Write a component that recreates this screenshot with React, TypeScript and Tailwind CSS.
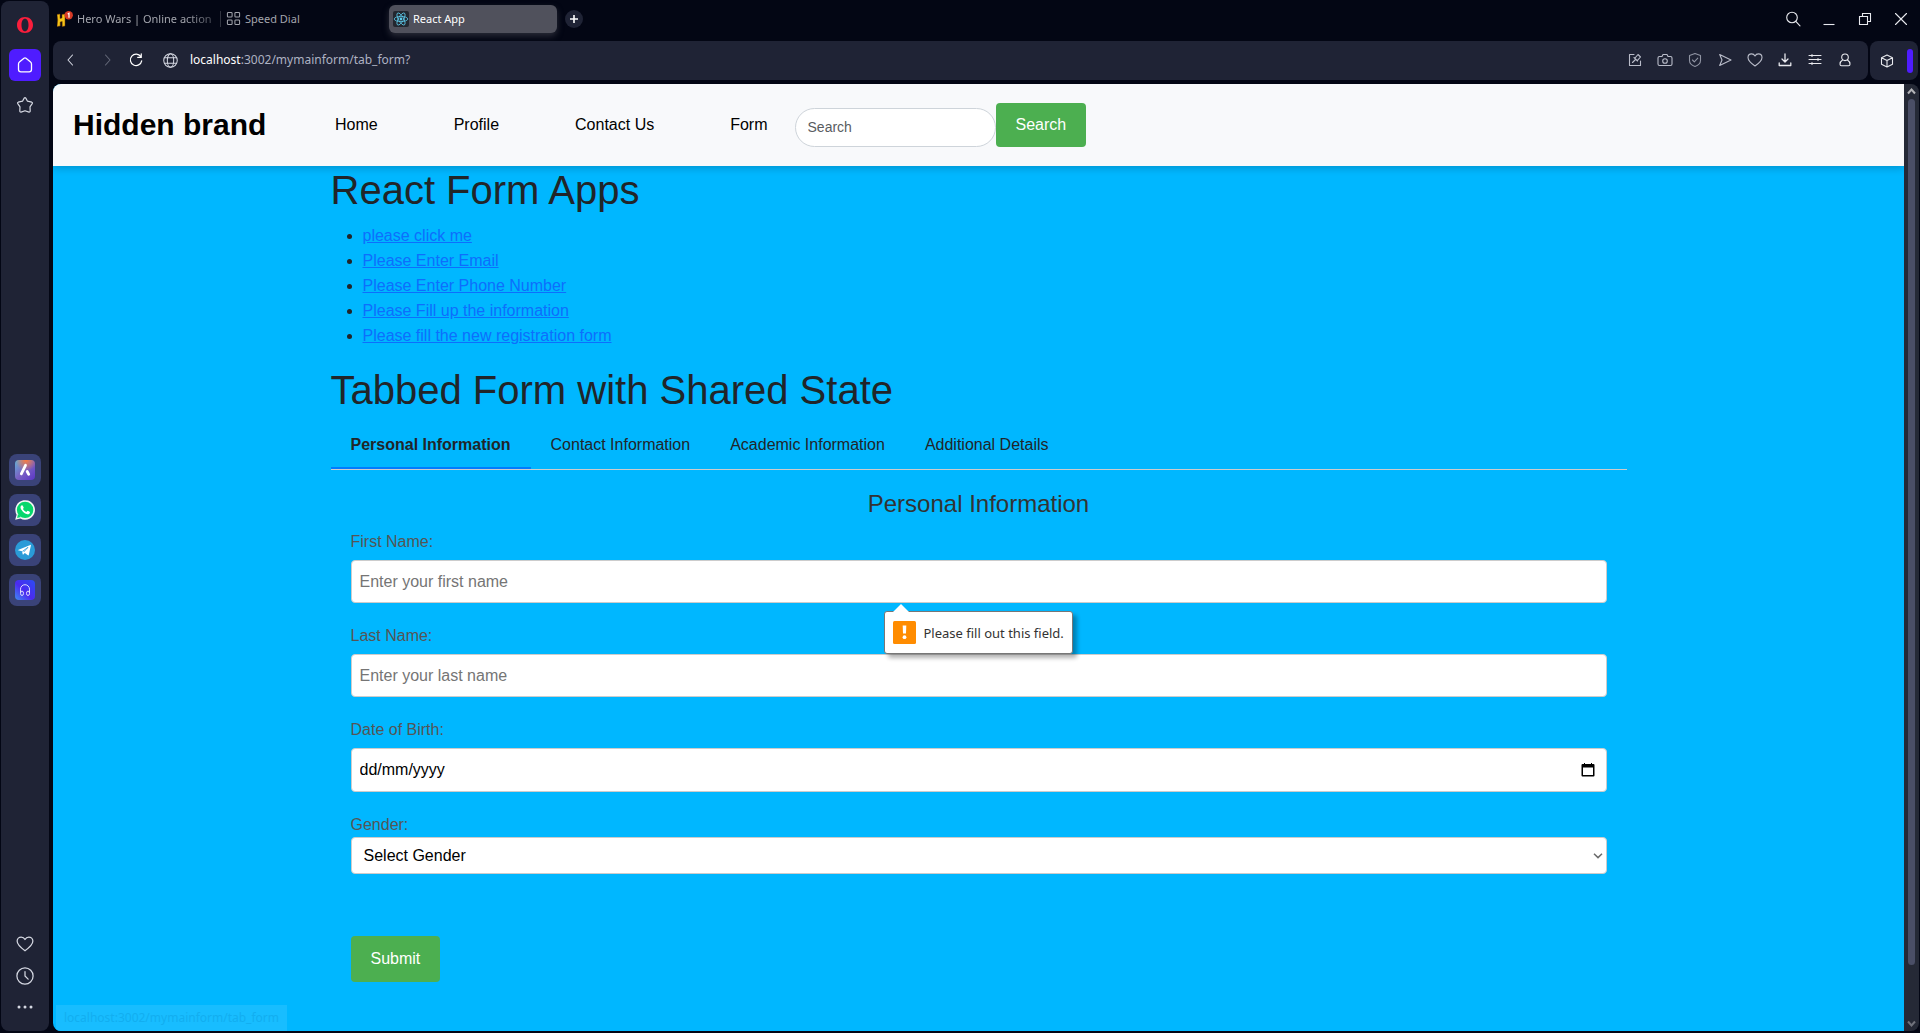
import type { ReactNode } from "react";

type IconProps = { children: ReactNode; size?: string };

function Icon({ children, size = "size-4" }: IconProps) {
  return (
    <svg
      viewBox="0 0 16 16"
      className={size}
      fill="none"
      stroke="currentColor"
      strokeWidth="1.1"
      strokeLinecap="round"
      strokeLinejoin="round"
      aria-hidden="true"
    >
      {children}
    </svg>
  );
}

const heart = (
  <path d="M8 14C4.5 11.5 1 9 1 5.4A3.6 3.6 0 0 1 4.6 1.9C6 1.9 7.300 2.700 8 4C8.700 2.700 10 1.900 11.400 1.900A3.600 3.600 0 0 1 15 5.400C15 9 11.500 11.500 8 14Z" />
);

function OperaLogo() {
  return (
    <svg viewBox="0 0 16 16" className="size-4" aria-hidden="true">
      <path
        fill="#fa1e3c"
        fillRule="evenodd"
        d="M8 0C3.400 0 0 3.400 0 8S3.400 16 8 16s8-3.400 8-8S12.600 0 8 0Zm0 1.700c2.200 0 3.500 2.700 3.500 6.300s-1.300 6.300-3.500 6.300S4.500 11.600 4.500 8s1.300-6.300 3.500-6.300Z"
      />
    </svg>
  );
}

function Sidebar() {
  return (
    <aside className="mt-px mr-1 mb-0.5 ml-px flex w-12 shrink-0 flex-col items-center rounded-lg bg-[#1f2335] pt-4 pb-3.5 text-[#d5d8e2]">
      <button aria-label="Opera menu" className="flex h-4 items-center">
        <OperaLogo />
      </button>
      <button
        aria-label="Workspace"
        className="mt-4 flex size-8 items-center justify-center rounded-md bg-[#4f1cff] text-white"
      >
        <Icon>
          <path strokeWidth="1.300" d="M7 1.300Q8 .6 9 1.300L13.300 4.800Q14.500 5.800 14.500 7V12.500Q14.500 14.900 12.100 14.900H3.900Q1.500 14.900 1.500 12.500V7Q1.500 5.800 2.700 4.800Z" />
        </Icon>
      </button>
      <button aria-label="Pinned" className="mt-4 flex size-4">
        <Icon>
          <path strokeWidth="1.200" d="M7.200 1.100Q8 .1 8.800 1.100L10.500 4.200 14.800 5.200Q15.800 5.600 15.200 6.600L13 9.800 13.200 14Q13.100 15.200 12 15.100L8 13.700 4 15.100Q2.900 15.200 2.800 14L3 9.800.8 6.600Q.2 5.600 1.200 5.200L5.500 4.200Z" />
        </Icon>
      </button>
      <div className="flex flex-1 flex-col items-center justify-center gap-2 pt-3">
        <button aria-label="Aria" className="flex size-8 items-center justify-center rounded-lg bg-[#3a4378]">
          <svg viewBox="0 0 20 20" className="size-5" aria-hidden="true">
            <defs>
              <linearGradient id="ariaBase" x1="0" y1="0" x2="1" y2="1">
                <stop offset="0" stopColor="#62b3d8" />
                <stop offset=".5" stopColor="#7a62c4" />
                <stop offset="1" stopColor="#5a35c8" />
              </linearGradient>
              <radialGradient id="ariaGlow" cx=".55" cy="0" r=".55">
                <stop offset="0" stopColor="#ff7a3c" />
                <stop offset="1" stopColor="#ff7a3c" stopOpacity="0" />
              </radialGradient>
            </defs>
            <rect width="20" height="20" rx="4" fill="url(#ariaBase)" />
            <rect width="20" height="20" rx="4" fill="url(#ariaGlow)" />
            <path d="M10.500 5.300 6.300 13.800" stroke="#fff" strokeWidth="2.800" strokeLinecap="round" />
            <path d="M12.200 11.500 13.700 14.300" stroke="#fff" strokeWidth="2.800" strokeLinecap="round" />
          </svg>
        </button>
        <button aria-label="WhatsApp" className="flex size-8 items-center justify-center rounded-lg bg-[#3a4378]">
          <svg viewBox="0 0 20 20" className="size-5" aria-hidden="true">
            <path fill="#f4f6f5" d="M.2 19.800 1.600 14.700A9.800 9.800 0 1 1 5.400 18.500Z" />
            <circle cx="10.100" cy="9.900" r="8.200" fill="#07d76c" />
            <path fill="#07d76c" d="M2.100 17.900 3 14 6 17Z" />
            <path fill="#fff" d="M7.300 5.300c-.4-.2-.9 0-1.200.4-.9 1-.9 2.500.5 4.400 1.700 2.400 3.700 3.900 5.800 4.200 1.300.2 2.600-.7 2.600-2.100 0-.4-2-1.400-2.400-1.400-.4 0-.8 1.200-1.300 1.200-.8 0-3.200-2.100-3.300-2.900 0-.4.700-.8.7-1.300 0-.3-.9-2.300-1.400-2.500Z" />
          </svg>
        </button>
        <button aria-label="Telegram" className="flex size-8 items-center justify-center rounded-lg bg-[#3a4378]">
          <svg viewBox="0 0 20 20" className="size-5" aria-hidden="true">
            <circle cx="10" cy="10" r="10" fill="#2a9bd8" />
            <path fill="#fff" d="M3 9.900 15.300 4.900Q16 4.700 15.900 5.500L13.800 15Q13.600 15.700 12.900 15.300L9.800 13 8.300 14.500Q7.800 14.900 7.700 14.200L7 11.300 3.100 10.300Q2.700 10.100 3 9.900Z" />
            <path stroke="#2a9bd8" strokeWidth=".8" d="M7.400 11.400 13 7.300 8.700 12" fill="none" />
          </svg>
        </button>
        <button aria-label="Player" className="flex size-8 items-center justify-center rounded-lg bg-[#3a4378]">
          <svg viewBox="0 0 20 20" className="size-5" aria-hidden="true">
            <defs>
              <linearGradient id="playerBase" x1="0" y1="1" x2="1" y2="0">
                <stop offset="0" stopColor="#3f8df5" />
                <stop offset=".45" stopColor="#4c2af0" />
                <stop offset="1" stopColor="#2b4df2" />
              </linearGradient>
            </defs>
            <rect width="20" height="20" rx="4" fill="url(#playerBase)" />
            <g fill="none" stroke="#dcdcff" strokeWidth="1">
              <path d="M5.500 13V9.200A4.500 4.500 0 0 1 14.500 9.200V13" />
              <ellipse cx="7" cy="13.300" rx="1.500" ry="2.200" />
              <ellipse cx="13" cy="13.300" rx="1.500" ry="2.200" />
            </g>
          </svg>
        </button>
      </div>
      <div className="flex flex-col items-center">
        <button aria-label="Favourites">
          <Icon size="size-[18px]">{heart}</Icon>
        </button>
        <button aria-label="History" className="mt-3.5">
          <Icon size="size-[18px]">
            <circle cx="8" cy="8" r="7.200" />
            <path d="M8 4V8L10.800 10.800" />
          </Icon>
        </button>
        <button aria-label="More" className="mt-4">
          <svg viewBox="0 0 16 16" className="size-4" fill="currentColor" aria-hidden="true">
            <circle cx="2" cy="6" r="1.500" />
            <circle cx="8" cy="6" r="1.500" />
            <circle cx="14" cy="6" r="1.500" />
          </svg>
        </button>
      </div>
    </aside>
  );
}

function TabStrip() {
  return (
    <div className="flex h-[41px] items-center pr-[11px] pb-1 pl-1 text-[11px] leading-4 text-[#a3a5ad]">
      <button className="flex w-[164px] items-center gap-1 border-r border-[#30333f] text-left">
        <svg viewBox="0 0 16 16" className="size-4 shrink-0" aria-hidden="true">
          <path fill="#f5c518" stroke="#7a3b00" strokeWidth=".5" d="M0 3.500 3 3V7.500L5 7V3.500L8 3V15L5.200 15.500V10.500L3.200 11V15L0 15.500 .7 9Z" />
          <circle cx="11.700" cy="4.300" r="4.200" fill="#d63a26" />
          <path stroke="#fff" strokeWidth="1.200" d="M10.700 3 12 2.200V6.700" fill="none" />
        </svg>
        <span className="whitespace-nowrap [mask-image:linear-gradient(to_right,black_80%,rgba(0,0,0,0.4))]">
          Hero Wars | Online action
        </span>
      </button>
      <button className="flex w-[168px] items-center gap-1 pl-[5px]">
        <Icon size="size-[15px]">
          <rect x="1.500" y="1.500" width="5" height="5" rx="1" />
          <rect x="9.500" y="1.500" width="5" height="5" rx="1" />
          <rect x="1.500" y="9.500" width="5" height="5" rx="1" />
          <rect x="9.500" y="9.500" width="5" height="5" rx="1" />
        </Icon>
        Speed Dial
      </button>
      <button className="flex h-7 w-[168px] items-center gap-1 rounded-md bg-[#50515c] pl-1 text-white shadow-[0_3px_6px_#2a2c38]">
        <svg viewBox="0 0 16 16" className="size-4" aria-hidden="true">
          <rect width="16" height="16" rx="2" fill="#23272f" />
          <g fill="none" stroke="#5cc8e8" strokeWidth=".8">
            <ellipse cx="8" cy="8" rx="6.800" ry="2.600" />
            <ellipse cx="8" cy="8" rx="6.800" ry="2.600" transform="rotate(60 8 8)" />
            <ellipse cx="8" cy="8" rx="6.800" ry="2.600" transform="rotate(120 8 8)" />
          </g>
          <circle cx="8" cy="8" r="1.400" fill="#5cc8e8" />
        </svg>
        React App
      </button>
      <button
        aria-label="New tab"
        className="ml-2 flex size-[18px] items-center justify-center rounded-full bg-[#1f2335] text-white"
      >
        <svg viewBox="0 0 8 8" className="size-2" stroke="currentColor" strokeWidth="1.600" aria-hidden="true">
          <path d="M4 0V8M0 4H8" />
        </svg>
      </button>
      <div className="ml-auto flex items-center gap-5 text-[#e8e9ee]">
        <button aria-label="Search tabs">
          <Icon>
            <circle cx="7" cy="6.500" r="5.300" />
            <path d="M10.800 10.300 15 14.800" />
          </Icon>
        </button>
        <button aria-label="Minimise">
          <Icon>
            <path d="M2.500 13.500H13.500" strokeLinecap="butt" />
          </Icon>
        </button>
        <button aria-label="Restore">
          <Icon>
            <path strokeLinejoin="miter" d="M2.500 5.500H10.500V13.500H2.500ZM5.500 5.500V2.500H13.500V10.500H10.500" />
          </Icon>
        </button>
        <button aria-label="Close">
          <Icon>
            <path d="M2.500 2.500 13.500 13.500M13.500 2.500 2.500 13.500" />
          </Icon>
        </button>
      </div>
    </div>
  );
}

function AddressBar() {
  return (
    <div className="mb-1 flex h-[39px] gap-0.5 pr-0.5">
      <div className="flex flex-1 items-center rounded-lg bg-[#1f2335] pr-[15px] pb-px pl-2.5 text-[#d5d8e2]">
        <button aria-label="Back">
          <Icon>
            <path d="M9.500 3 5 8 9.500 13" />
          </Icon>
        </button>
        <button aria-label="Forward" className="ml-5 text-[#646878]">
          <Icon>
            <path d="M6.500 3 11 8 6.500 13" />
          </Icon>
        </button>
        <button aria-label="Reload" className="ml-[14px] text-white">
          <Icon size="size-[14px]">
            <path strokeWidth="1.400" d="M13.500 4.200A6.500 6.500 0 1 0 14.500 9M14 1V5H10" />
          </Icon>
        </button>
        <button aria-label="Site information" className="ml-5">
          <Icon size="size-[15px]">
            <circle cx="8" cy="8" r="7.200" />
            <ellipse cx="8" cy="8" rx="3.400" ry="7.200" />
            <path d="M1.500 5H14.500M1.500 11H14.500" />
          </Icon>
        </button>
        <p className="ml-3 text-[12px] leading-4 text-[#aeb2c2]">
          <span className="text-white">localhost</span>:3002/mymainform/tab_form?
        </p>
        <div className="ml-auto flex items-center gap-[14px] text-[#b9bcc9]">
          <button aria-label="Edit page">
            <Icon>
              <path d="M7 2.500H2.500V13.500H13.500V9M5.500 10.500 8.500 7.500M7 5.500 10.500 9M8 6 11 2.500 13.500 5 10.500 8.300" />
            </Icon>
          </button>
          <button aria-label="Snapshot">
            <Icon>
              <path d="M2.500 4.500H5L6 2.500H10L11 4.500H13.500Q15 4.500 15 6V12Q15 13.500 13.500 13.500H2.500Q1 13.500 1 12V6Q1 4.500 2.500 4.500Z" />
              <circle cx="8" cy="9" r="2.300" />
            </Icon>
          </button>
          <button aria-label="Privacy protection" className="text-[#9094a3]">
            <Icon>
              <path d="M8 1.500 13.500 3.500V8.500Q13.500 12.500 8 14.500 2.500 12.500 2.500 8.500V3.500ZM5.500 8 7.300 9.800 10.800 6.200" />
            </Icon>
          </button>
          <button aria-label="Send to Flow">
            <Icon>
              <path d="M2.700 2.500 14 8 2.700 13.500 5 8Z" />
            </Icon>
          </button>
          <button aria-label="Add to bookmarks">
            <Icon>{heart}</Icon>
          </button>
          <button aria-label="Downloads" className="text-[#e8e9ee]">
            <Icon>
              <path d="M8 2V9.800M5 7 8 10 11 7M2.200 11V13.500H13.800V11" strokeWidth="1.300" />
            </Icon>
          </button>
          <button aria-label="Easy setup" className="text-[#e8e9ee]">
            <Icon>
              <path d="M2 3.500H14M2 7.500H14M2 11.500H14M5 2.500V4.500M11 6.500V8.500M5 10.500V12.500" />
            </Icon>
          </button>
          <button aria-label="Profile" className="text-[#e8e9ee]">
            <Icon>
              <circle cx="8" cy="5.300" r="3.300" />
              <path d="M5.500 8Q3 9.500 3 12.300 3 13.800 4.500 13.800H11.500Q13 13.800 13 12.300 13 9.500 10.500 8" />
            </Icon>
          </button>
        </div>
      </div>
      <div className="flex w-12 items-center justify-between rounded-lg bg-[#1f2335] pr-[5px] pl-[9px] text-[#e8e9ee]">
        <button aria-label="Extensions">
          <Icon>
            <path d="M8 2 13.500 4.700V11.300L8 14 2.500 11.300V4.700ZM2.500 4.700 8 7.400 13.500 4.700M8 7.400V14" />
          </Icon>
        </button>
        <span className="h-6 w-1.5 rounded-full bg-[#4f1cff]" />
      </div>
    </div>
  );
}

const menu = ["Home", "Profile", "Contact Us", "Form"];

function Navbar() {
  return (
    <nav className="relative flex h-[82px] items-center bg-[#f8f9fb] pl-5 text-black shadow-[0_2px_8px_rgba(0,0,0,0.2)]">
      <a href="#brand" className="w-[262px] text-[30px] leading-9 font-bold whitespace-nowrap">
        Hidden brand
      </a>
      <ul className="flex gap-[76px] pb-0.5">
        {menu.map((item) => (
          <li key={item}>
            <a href="#page" className="whitespace-nowrap">
              {item}
            </a>
          </li>
        ))}
      </ul>
      <form className="ml-[27px] flex items-end">
        <input
          type="search"
          aria-label="Search"
          placeholder="Search"
          className="h-[39px] w-[201px] rounded-full border border-[#ced4da] bg-white px-3 pb-0.5 text-[14px] placeholder:text-[#595c5f]"
        />
        <button type="button" className="h-11 rounded bg-[#4caf50] px-5 pb-0.5 text-white">
          Search
        </button>
      </form>
    </nav>
  );
}

const links = [
  "please click me",
  "Please Enter Email",
  "Please Enter Phone Number",
  "Please Fill up the information",
  "Please fill the new registration form",
];

const tabs = ["Personal Information", "Contact Information", "Academic Information", "Additional Details"];

function ValidationBubble() {
  return (
    <div
      role="alert"
      className="absolute top-full left-[calc(50%-95px)] z-10 mt-2 flex h-[43px] items-center gap-2 rounded-[3px] border border-[#777] bg-white px-2 font-['Noto_Sans',sans-serif] text-[13px] leading-4 whitespace-nowrap text-[#333] shadow-[4px_4px_4px_rgba(0,0,0,0.3)]"
    >
      <svg viewBox="0 0 16 8" className="absolute -top-2 left-2 h-2 w-4" aria-hidden="true">
        <path d="M0 8 8 0 16 8Z" fill="#fff" />
      </svg>
      <svg viewBox="0 0 23 23" className="size-[23px]" aria-hidden="true">
        <rect width="23" height="23" rx="1.500" fill="#ff8c00" />
        <path fill="#fff" d="M9.700 4.500H13.300L13 12.500H10Z" />
        <circle cx="11.500" cy="16.200" r="1.900" fill="#fff" />
      </svg>
      Please fill out this field.
    </div>
  );
}

const fieldClass =
  "mt-[5px] block h-[43px] w-full rounded border border-[#ccc] bg-white px-2 text-black placeholder:text-[#757575]";

function TabForm() {
  return (
    <form className="p-5 leading-[26px] text-[#555]">
      <h2 className="mb-3 text-center text-[24px] leading-[27px] text-[#333]">Personal Information</h2>
      <div className="relative mb-5">
        <label htmlFor="first">First Name:</label>
        <input id="first" type="text" placeholder="Enter your first name" className={fieldClass} />
        <ValidationBubble />
      </div>
      <div className="mb-5">
        <label htmlFor="last">Last Name:</label>
        <input id="last" type="text" placeholder="Enter your last name" className={fieldClass} />
      </div>
      <div className="mb-5">
        <label htmlFor="birth">Date of Birth:</label>
        <div className="relative">
          <input
            id="birth"
            type="text"
            placeholder="dd/mm/yyyy"
            className="mt-[5px] block h-11 w-full rounded border border-[#ccc] bg-white px-2 text-black placeholder:text-black"
          />
          <button
            type="button"
            aria-label="Open calendar"
            className="absolute inset-y-0 right-3 flex items-center text-black"
          >
            <svg viewBox="0 0 14 16" className="h-4 w-3.5" fill="currentColor" aria-hidden="true">
              <path
                fillRule="evenodd"
                d="M1.500 2H3V1H4V2H10V1H11V2H12.500Q13.500 2 13.500 3V13.500Q13.500 14.500 12.500 14.500H1.500Q.5 14.500 .5 13.500V3Q.5 2 1.500 2ZM2 5.500V13H12V5.500Z"
              />
            </svg>
          </button>
        </div>
      </div>
      <div className="mb-[62px]">
        <label htmlFor="gender" className="block h-[25px]">
          Gender:
        </label>
        <div className="relative">
          <select
            id="gender"
            className="block h-[37px] w-full appearance-none rounded border border-[#ccc] bg-white px-3 text-black"
          >
            <option>Select Gender</option>
            <option>Male</option>
            <option>Female</option>
            <option>Other</option>
          </select>
          <svg
            viewBox="0 0 10 6"
            className="pointer-events-none absolute top-4 right-1 h-1.5 w-2.5"
            fill="none"
            stroke="#6b6b6b"
            strokeWidth="1.500"
            aria-hidden="true"
          >
            <path d="M1 .8 5 4.600 9 .8" />
          </svg>
        </div>
      </div>
      <button type="button" className="h-[46px] rounded bg-[#4caf50] px-5 text-white">
        Submit
      </button>
    </form>
  );
}

function Page() {
  return (
    <div className="relative flex-1 overflow-hidden rounded-l-lg bg-[#00b7ff] font-['Liberation_Sans',Arial,sans-serif] text-[16px] leading-[25px] text-[#212529]">
      <Navbar />
      <main className="mx-auto max-w-[1320px] px-3">
        <h1 className="mb-[9px] text-[40px] leading-[48px]">React Form Apps</h1>
        <ul className="mb-[18px] list-disc pl-8">
          {links.map((text) => (
            <li key={text}>
              <a href="#form" className="text-[#0d6efd] underline">
                {text}
              </a>
            </li>
          ))}
        </ul>
        <h1 className="mb-2 text-[40px] leading-[48px]">Tabbed Form with Shared State</h1>
        <div role="tablist" className="flex border-b border-[#ccc]">
          {tabs.map((text, i) => (
            <button
              key={text}
              role="tab"
              aria-selected={i === 0}
              className={
                i === 0
                  ? "border-b-2 border-[#007bff] px-5 py-2.5 font-bold"
                  : "border-b-2 border-transparent px-5 py-2.5"
              }
            >
              {text}
            </button>
          ))}
        </div>
        <TabForm />
      </main>
      <div className="absolute bottom-0 left-[3px] h-[26px] bg-[#18bdff] px-2 font-['Noto_Sans',sans-serif] text-[12px] leading-[26px] text-[#12aef0]">
        localhost:3002/mymainform/tab_form
      </div>
    </div>
  );
}

function ScrollBar() {
  return (
    <div className="flex w-[15px] flex-col items-center rounded-r-lg bg-[#252936] text-[#b4b4b8]">
      <svg viewBox="0 0 15 15" className="size-[15px]" fill="none" stroke="currentColor" strokeWidth="2" aria-hidden="true">
        <path d="M4 9.500 7.500 5.500 11 9.500" />
      </svg>
      <div className="w-[7px] flex-1 pb-[51px]">
        <div className="h-full rounded-full bg-[#4a4e66]" />
      </div>
      <svg viewBox="0 0 15 15" className="size-[15px] text-[#70727c]" fill="none" stroke="currentColor" strokeWidth="2" aria-hidden="true">
        <path d="M4 5.500 7.500 9.500 11 5.500" />
      </svg>
    </div>
  );
}

export default function App() {
  return (
    <div className="flex h-screen overflow-hidden bg-[#030614] font-['Noto_Sans',sans-serif]">
      <Sidebar />
      <div className="flex min-w-0 flex-1 flex-col">
        <TabStrip />
        <AddressBar />
        <div className="mr-px mb-0.5 flex min-h-0 flex-1">
          <Page />
          <ScrollBar />
        </div>
      </div>
    </div>
  );
}
